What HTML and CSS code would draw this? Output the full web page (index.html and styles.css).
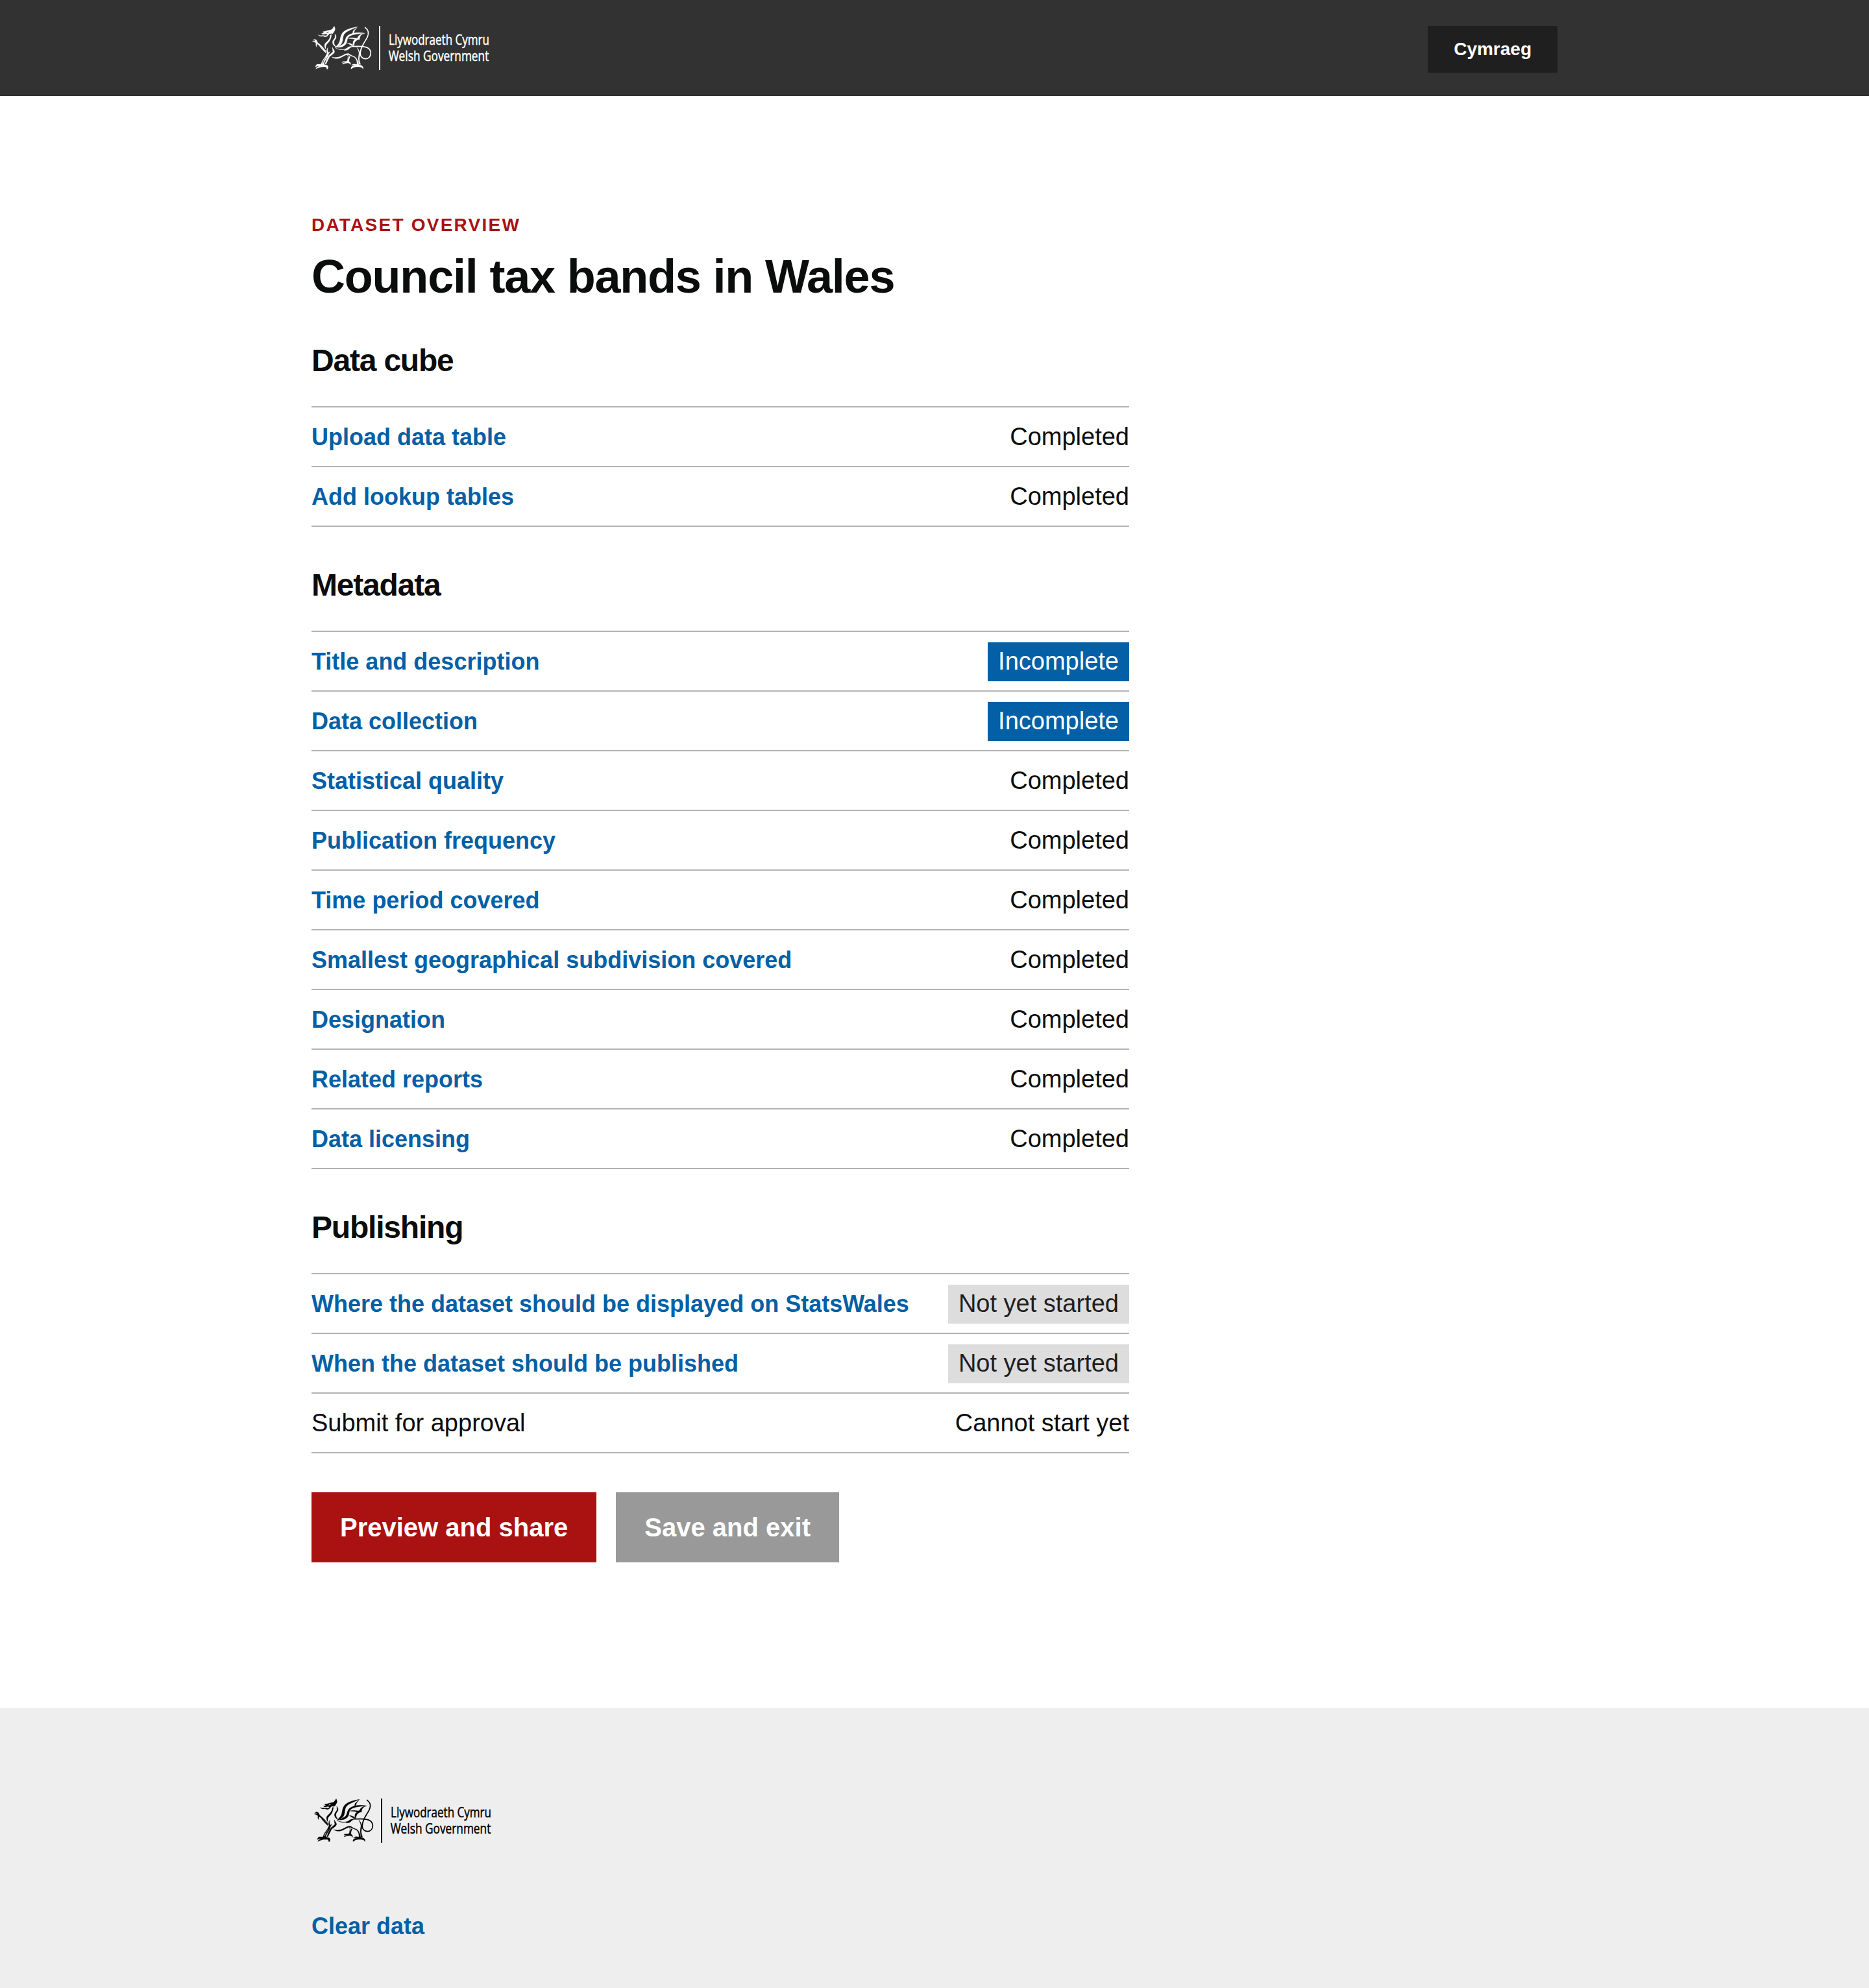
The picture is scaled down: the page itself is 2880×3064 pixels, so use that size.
FILE: index.html
```html
<!DOCTYPE html>
<html lang="en">
<head>
<meta charset="utf-8">
<title>Council tax bands in Wales</title>
<link rel="stylesheet" href="styles.css">
</head>
<body>
<svg class="defs" aria-hidden="true">
  <symbol id="wg-logo" viewBox="30 30 825 204">
    <g class="dragon">
      <!-- head and crest -->
      <path d="M135 31C131 38 128 42 124 46C117 51 104 49 96 54L84 56L82 60L90 60C84 64 80 65 76 65L82 69C90 70 94 67 99 67L104 70L98 75C91 76 86 73 78 74C72 75 66 73 61 71C64 76 70 78 76 78L84 77C90 81 97 81 103 77L110 69C114 64 118 68 122 63L124 68C129 64 133 60 136 53C141 47 139 39 135 31ZM103 57L112 56L107 61L98 62Z"/>
      <!-- neck -->
      <path d="M122 70C122 88 114 102 103 112C95 120 94 130 98 138C90 130 87 119 95 109C107 98 117 88 117 72Z"/>
      <path d="M138 66C144 76 146 80 143 86C140 92 135 96 134 104C134 112 137 120 145 126C134 124 127 115 127 104C128 94 138 89 139 81Z"/>
      <!-- raised foreleg -->
      <path d="M34 101C39 99 43 100 48 102L45 97C42 95 40 96 37 97C41 91 49 91 54 97L59 107C69 114 81 126 91 138C78 132 66 120 57 113L53 120L55 128C50 124 49 117 51 112L47 106C42 103 39 104 34 101Z"/>
      <path d="M63 117C73 128 84 137 95 142L96 155C87 146 73 134 63 117Z"/>
      <!-- foreleg and chest -->
      <path d="M106 130C101 139 97 148 102 156L94 172C87 182 78 193 74 207L58 207C52 208 49 213 48 220L57 215L66 216L54 221L50 229C59 223 70 221 79 219L96 219C99 222 101 226 102 231C108 225 109 217 103 212L91 209L87 205C92 189 107 174 109 160L116 148L109 153C104 148 103 139 106 130ZM102 168C95 180 86 190 84 202L80 206C81 191 92 180 102 168Z"/>
      <path d="M126 128C131 139 139 143 136 152C132 161 121 164 114 172L105 190L97 206L92 206C98 190 104 174 112 164C120 156 132 151 128 144Z"/>
      <!-- belly -->
      <path d="M124 173C140 179 160 175 174 166C184 160 192 156 203 158L213 166L201 163C190 162 180 169 170 174C154 183 137 184 124 173Z"/>
      <!-- leading wing -->
      <path d="M243 34C220 38 188 45 174 61C162 77 164 92 159 105C154 116 144 123 139 131C153 127 166 119 171 107C177 93 173 78 183 66C195 52 220 45 243 34Z"/>
      <path d="M241 36L229 52L225 65L220 66L222 53Z"/>
      <!-- trailing wing -->
      <path d="M276 64C250 58 218 61 200 73C186 82 188 96 181 108C174 118 159 122 149 129C165 131 184 124 191 111C197 99 193 87 204 79C221 68 247 66 276 64Z"/>
      <path d="M274 64C261 69 253 76 252 93L248 93C244 89 238 88 232 90L244 84C246 75 257 67 274 64Z"/>
      <path d="M248 92C231 84 215 83 199 87C213 90 226 89 232 93C224 97 220 103 222 117L226 123C228 109 229 99 248 92Z"/>
      <path d="M196 109L217 122L224 121C216 112 207 109 196 109Z"/>
      <!-- back -->
      <path d="M141 132C160 141 183 141 194 132C201 125 212 122 224 124C213 128 208 131 202 137C196 143 186 142 180 143L185 139C168 141 151 140 141 132Z"/>
      <!-- haunch and hind leg -->
      <path d="M201 159C212 168 236 168 241 186C246 195 247 202 248 208L261 213C268 217 270 222 268 229C265 222 258 219 248 219L236 219L224 222L213 229C211 221 216 217 224 214L232 214L222 211L215 212C219 206 228 205 240 208C241 193 237 179 224 173L206 166ZM239 128C252 141 258 160 252 174C249 187 254 197 257 208L250 207C246 191 245 178 248 166C252 153 246 141 239 128Z"/>
      <!-- far hind leg -->
      <path d="M195 163L199 170L196 190L190 194L176 194L170 199L180 198L188 199L176 202L171 207L184 203L199 201L207 204L210 209C213 202 209 197 203 194L204 184L209 171L205 170L200 184L200 167Z"/>
    </g>
    <path fill="currentColor" d="M342 30h6v204h-6z"/>
    <!-- tail -->
    <path class="tail" d="M221 125C250 123 276 122 291 132C307 143 307 162 298 174C286 187 264 183 257 166C250 143 270 112 282 93C292 77 296 59 288 47L278 37"/>
    <text class="wordmark" x="387" y="116" textLength="465" lengthAdjust="spacingAndGlyphs">Llywodraeth Cymru</text>
    <text class="wordmark" x="386" y="191" textLength="464" lengthAdjust="spacingAndGlyphs">Welsh Government</text>
  </symbol>
</svg>

<header class="header">
  <div class="container header-inner">
    <svg class="logo" role="img" aria-label="Welsh Government"><use href="#wg-logo"/></svg>
    <a class="language" href="#">Cymraeg</a>
  </div>
</header>

<main class="container main">
  <p class="eyebrow">Dataset overview</p>
  <h1>Council tax bands in Wales</h1>

  <section>
    <h2>Data cube</h2>
    <ul class="tasks">
      <li><a href="#">Upload data table</a><span>Completed</span></li>
      <li><a href="#">Add lookup tables</a><span>Completed</span></li>
    </ul>
  </section>

  <section>
    <h2>Metadata</h2>
    <ul class="tasks">
      <li><a href="#">Title and description</a><span class="tag tag-blue">Incomplete</span></li>
      <li><a href="#">Data collection</a><span class="tag tag-blue">Incomplete</span></li>
      <li><a href="#">Statistical quality</a><span>Completed</span></li>
      <li><a href="#">Publication frequency</a><span>Completed</span></li>
      <li><a href="#">Time period covered</a><span>Completed</span></li>
      <li><a href="#">Smallest geographical subdivision covered</a><span>Completed</span></li>
      <li><a href="#">Designation</a><span>Completed</span></li>
      <li><a href="#">Related reports</a><span>Completed</span></li>
      <li><a href="#">Data licensing</a><span>Completed</span></li>
    </ul>
  </section>

  <section>
    <h2>Publishing</h2>
    <ul class="tasks">
      <li><a href="#">Where the dataset should be displayed on StatsWales</a><span class="tag tag-grey">Not yet started</span></li>
      <li><a href="#">When the dataset should be published</a><span class="tag tag-grey">Not yet started</span></li>
      <li><span>Submit for approval</span><span>Cannot start yet</span></li>
    </ul>
  </section>

  <div class="actions">
    <a class="button" href="#">Preview and share</a>
    <a class="button button-secondary" href="#">Save and exit</a>
  </div>
</main>

<footer class="footer">
  <div class="container">
    <svg class="logo footer-logo" role="img" aria-label="Welsh Government"><use href="#wg-logo"/></svg>
    <a class="footer-link" href="#">Clear data</a>
  </div>
</footer>
</body>
</html>
```
FILE: styles.css
```css
* { box-sizing: border-box; }

body {
  margin: 0;
  min-height: 3064px;
  display: flex;
  flex-direction: column;
  background: #fff;
  color: #0b0c0c;
  font-family: "Liberation Sans", Arial, sans-serif;
  font-size: 38px;
}

a { color: #0360a6; font-weight: 700; text-decoration: none; }

.defs { display: none; }

.container {
  width: 1920px;
  margin: 0 auto;
}

.header {
  height: 148px;
  background: #323232;
  color: #fff;
}

.header-inner {
  display: flex;
  justify-content: space-between;
  align-items: flex-start;
  padding-top: 40px;
}

.logo {
  display: block;
  width: 275px;
  height: 68px;
}

.dragon { fill: currentColor; stroke: currentColor; stroke-width: 1; }

.tail { fill: none; stroke: currentColor; stroke-width: 5; stroke-linecap: round; }

.wordmark {
  fill: currentColor;
  stroke: currentColor;
  stroke-width: 1.4;
  font-family: "Open Sans", "Noto Sans", sans-serif;
  font-size: 63px;
  font-weight: 500;
}

.language {
  height: 72px;
  padding: 0 40px;
  background: #1f1f1f;
  color: #fff;
  font-size: 28px;
  line-height: 72px;
}

.main { padding: 179px 0 224px; }

.eyebrow {
  margin: 0 0 19px;
  color: #aa1111;
  font-size: 28px;
  font-weight: 700;
  line-height: 40px;
  letter-spacing: 0.08em;
  text-transform: uppercase;
}

h1 {
  margin: 0;
  font-size: 72px;
  line-height: 80px;
  letter-spacing: -1.2px;
}

h2 {
  margin: 60px 0 40px;
  font-size: 48px;
  line-height: 60px;
  letter-spacing: -1.2px;
}

.tasks {
  width: 1260px;
  margin: 0;
  padding: 0;
  border-top: 2px solid #b1b4b6;
  list-style: none;
}

.tasks li {
  display: flex;
  justify-content: space-between;
  align-items: baseline;
  height: 92px;
  padding-top: 16px;
  border-bottom: 2px solid #b1b4b6;
  line-height: 58px;
}

.tasks a { font-size: 36px; }

.tag { padding: 0 16px 2px; }
.tag-blue { background: #0360a6; color: #fff; }
.tag-grey { background: #dddddd; color: #1f1f1f; }

.actions {
  display: flex;
  gap: 30px;
  margin-top: 60px;
}

.button {
  height: 108px;
  padding: 0 44px;
  background: #aa1111;
  color: #fff;
  font-size: 40px;
  line-height: 108px;
}

.button-secondary { background: #999999; }

.footer {
  flex: 1;
  padding-top: 140px;
  background: #eeeeee;
}

.footer-logo { margin: 0 0 99px 3px; color: #000; }

.footer-link {
  display: block;
  font-size: 36px;
  line-height: 60px;
}
```
